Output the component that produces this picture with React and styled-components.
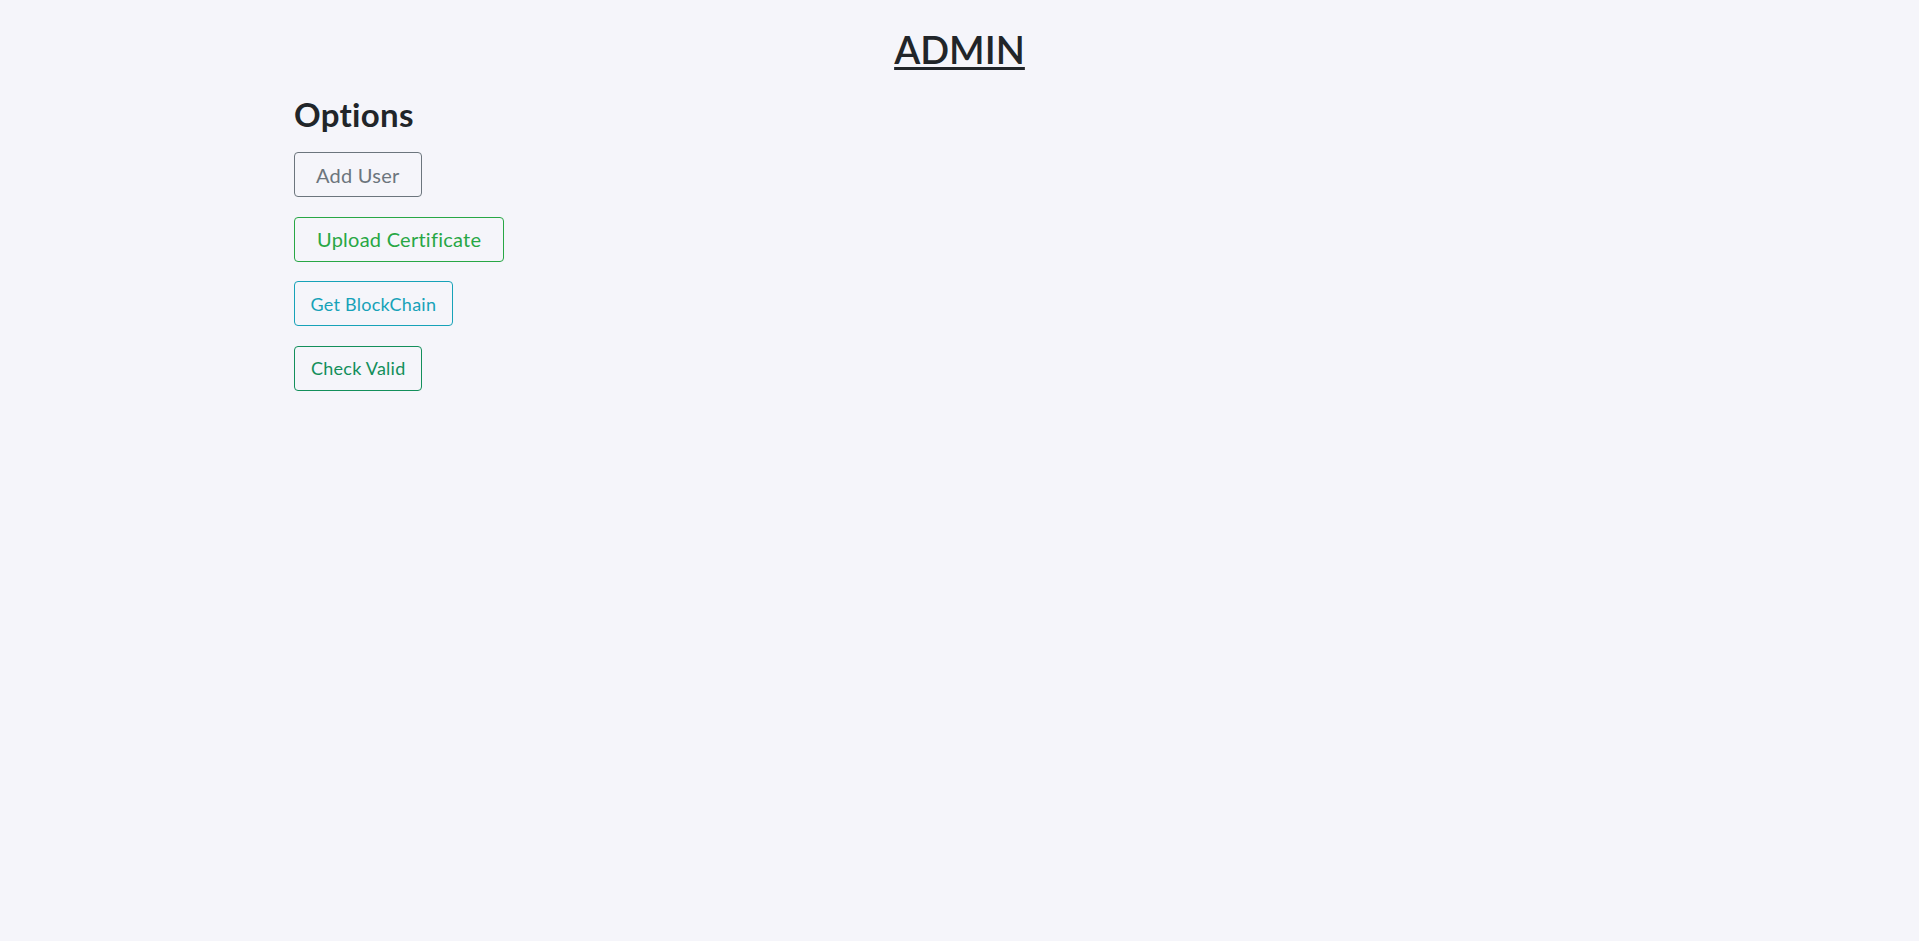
import React from "react";
import styled, { createGlobalStyle } from "styled-components";

const GlobalStyle = createGlobalStyle`
  html, body {
    margin: 0;
    padding: 0;
    background-color: #f5f5fa;
  }
  body {
    font-family: Lato, "Liberation Sans", sans-serif;
    color: #212529;
    min-height: 100vh;
  }
`;

const Page = styled.div`
  min-height: 100vh;
  padding-top: 27px;
  box-sizing: border-box;
`;

const Title = styled.h1`
  margin: 0;
  text-align: center;
  font-size: 38px;
  font-weight: 600;
  line-height: 1.2;
  text-decoration: underline;
  text-decoration-thickness: 3px;
  text-underline-offset: 3px;
`;

const Container = styled.div`
  max-width: 1331px;
  margin: 0 auto;
`;

const Heading = styled.h2`
  margin: 22px 0 18px;
  font-size: 33px;
  font-weight: 700;
  line-height: 1.2;
  letter-spacing: 0.3px;
`;

const ButtonList = styled.div`
  display: flex;
  flex-direction: column;
  align-items: flex-start;
  gap: 19.5px;
`;

const OutlineButton = styled.button`
  box-sizing: border-box;
  height: 45px;
  padding: 0 ${(p) => p.$padX}px;
  font-family: Lato, "Liberation Sans", sans-serif;
  font-size: ${(p) => p.$size}px;
  letter-spacing: 0.25px;
  line-height: 1;
  color: ${(p) => p.$color};
  background: transparent;
  border: 1px solid ${(p) => p.$color};
  border-radius: 4px;
  cursor: pointer;
`;

const options = [
  { label: "Add User", color: "#6c757d", size: 20, padX: 21 },
  { label: "Upload Certificate", color: "#28a745", size: 20, padX: 22 },
  { label: "Get BlockChain", color: "#17a2b8", size: 18, padX: 15.5 },
  { label: "Check Valid", color: "#138f5b", size: 18, padX: 16 },
];

export default function App() {
  return (
    <>
      <GlobalStyle />
      <Page>
        <Title>ADMIN</Title>
        <Container>
          <Heading>Options</Heading>
          <ButtonList>
            {options.map((o) => (
              <OutlineButton
                key={o.label}
                $color={o.color}
                $size={o.size}
                $padX={o.padX}
              >
                {o.label}
              </OutlineButton>
            ))}
          </ButtonList>
        </Container>
      </Page>
    </>
  );
}
